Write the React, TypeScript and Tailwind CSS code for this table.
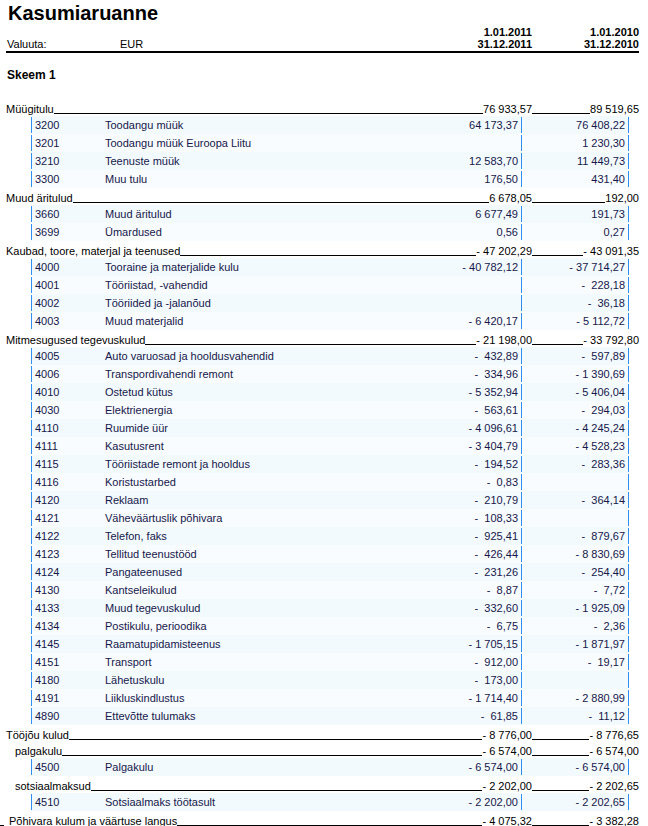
import React from "react";

type Detail = { code: string; name: string; v1: string; v2: string };
type Group = { label: string; v1: string; v2: string; details: Detail[] };

const groups: Group[] = [
  {
    label: "Müügitulu", v1: "76 933,57", v2: "89 519,65",
    details: [
      { code: "3200", name: "Toodangu müük", v1: "64 173,37", v2: "76 408,22" },
      { code: "3201", name: "Toodangu müük Euroopa Liitu", v1: "", v2: "1 230,30" },
      { code: "3210", name: "Teenuste müük", v1: "12 583,70", v2: "11 449,73" },
      { code: "3300", name: "Muu tulu", v1: "176,50", v2: "431,40" },
    ],
  },
  {
    label: "Muud äritulud", v1: "6 678,05", v2: "192,00",
    details: [
      { code: "3660", name: "Muud äritulud", v1: "6 677,49", v2: "191,73" },
      { code: "3699", name: "Ümardused", v1: "0,56", v2: "0,27" },
    ],
  },
  {
    label: "Kaubad, toore, materjal ja teenused", v1: "- 47 202,29", v2: "- 43 091,35",
    details: [
      { code: "4000", name: "Tooraine ja materjalide kulu", v1: "- 40 782,12", v2: "- 37 714,27" },
      { code: "4001", name: "Tööriistad, -vahendid", v1: "", v2: "-  228,18" },
      { code: "4002", name: "Tööriided ja -jalanõud", v1: "", v2: "-  36,18" },
      { code: "4003", name: "Muud materjalid", v1: "- 6 420,17", v2: "- 5 112,72" },
    ],
  },
  {
    label: "Mitmesugused tegevuskulud", v1: "- 21 198,00", v2: "- 33 792,80",
    details: [
      { code: "4005", name: "Auto varuosad ja hooldusvahendid", v1: "-  432,89", v2: "-  597,89" },
      { code: "4006", name: "Transpordivahendi remont", v1: "-  334,96", v2: "- 1 390,69" },
      { code: "4010", name: "Ostetud kütus", v1: "- 5 352,94", v2: "- 5 406,04" },
      { code: "4030", name: "Elektrienergia", v1: "-  563,61", v2: "-  294,03" },
      { code: "4110", name: "Ruumide üür", v1: "- 4 096,61", v2: "- 4 245,24" },
      { code: "4111", name: "Kasutusrent", v1: "- 3 404,79", v2: "- 4 528,23" },
      { code: "4115", name: "Tööriistade remont ja hooldus", v1: "-  194,52", v2: "-  283,36" },
      { code: "4116", name: "Koristustarbed", v1: "-  0,83", v2: "" },
      { code: "4120", name: "Reklaam", v1: "-  210,79", v2: "-  364,14" },
      { code: "4121", name: "Väheväärtuslik põhivara", v1: "-  108,33", v2: "" },
      { code: "4122", name: "Telefon, faks", v1: "-  925,41", v2: "-  879,67" },
      { code: "4123", name: "Tellitud teenustööd", v1: "-  426,44", v2: "- 8 830,69" },
      { code: "4124", name: "Pangateenused", v1: "-  231,26", v2: "-  254,40" },
      { code: "4130", name: "Kantseleikulud", v1: "-  8,87", v2: "-  7,72" },
      { code: "4133", name: "Muud tegevuskulud", v1: "-  332,60", v2: "- 1 925,09" },
      { code: "4134", name: "Postikulu, perioodika", v1: "-  6,75", v2: "-  2,36" },
      { code: "4145", name: "Raamatupidamisteenus", v1: "- 1 705,15", v2: "- 1 871,97" },
      { code: "4151", name: "Transport", v1: "-  912,00", v2: "-  19,17" },
      { code: "4180", name: "Lähetuskulu", v1: "-  173,00", v2: "" },
      { code: "4191", name: "Liikluskindlustus", v1: "- 1 714,40", v2: "- 2 880,99" },
      { code: "4890", name: "Ettevõtte tulumaks", v1: "-  61,85", v2: "-  11,12" },
    ],
  },
];

function GroupRow({ label, v1, v2, sub, stub }: { label: string; v1: string; v2: string; sub?: boolean; stub?: boolean }) {
  return (
    <div className={"flex h-[16px] items-end pr-[9px] text-black " + (sub ? "pl-[15px]" : stub ? "pl-0" : "pl-[6px]")}>
      {stub && <div className="mb-[2px] mr-[5px] w-[4px] border-b border-black" />}
      <span className="whitespace-pre leading-[14px]">{label}</span>
      <div className="mb-[2px] flex-1 border-b border-black" />
      <span className="whitespace-pre leading-[14px]">{v1}</span>
      <div className="flex w-[107px] items-end">
        <div className="mb-[2px] flex-1 border-b border-black" />
        <span className="whitespace-pre leading-[14px]">{v2}</span>
      </div>
    </div>
  );
}

function DetailRow({ d, i }: { d: Detail; i: number }) {
  return (
    <div className={"ml-[31px] mr-[19px] flex h-[18px] text-[#17174a] " + (i % 2 === 0 ? "bg-[#f2fafd]" : "bg-[#f8fcfe]")}>
      <div className="my-px w-[74px] border-l border-[#2e8ff0] pl-[3px] leading-[16px]">{d.code}</div>
      <div className="flex-1 leading-[18px]">{d.name}</div>
      <div className="my-px w-[100px] whitespace-pre border-r border-[#2e8ff0] pr-[3px] text-right leading-[16px]">{d.v1}</div>
      <div className="my-px w-[107px] whitespace-pre border-r border-[#2e8ff0] pr-[3px] text-right leading-[16px]">{d.v2}</div>
    </div>
  );
}

export default function App() {
  return (
    <div className="h-[826px] w-[648px] overflow-hidden bg-white font-['Liberation_Sans',Arial,sans-serif] text-[11px]">
      <div className="pl-[8px] text-[20px] font-bold leading-[26px] text-black">Kasumiaruanne</div>
      <div className="ml-[6px] mr-[9px] flex border-b-2 border-black pb-[1px] text-black">
        <div className="flex flex-1 items-end">
          <span className="w-[114px] pl-px leading-[12px]">Valuuta:</span>
          <span className="leading-[12px]">EUR</span>
        </div>
        <div className="flex flex-col items-end font-bold leading-[12px]">
          <span>1.01.2011</span>
          <span>31.12.2011</span>
        </div>
        <div className="flex w-[107px] flex-col items-end font-bold leading-[12px]">
          <span>1.01.2010</span>
          <span>31.12.2010</span>
        </div>
      </div>
      <div className="mt-[15px] pl-[7px] text-[12px] font-bold leading-[14px] text-black">Skeem 1</div>
      <div className="mt-[18px] flex flex-col gap-[1px]">
        {groups.map((g) => (
          <div key={g.label}>
            <GroupRow label={g.label} v1={g.v1} v2={g.v2} />
            {g.details.map((d, i) => (
              <DetailRow key={d.code} d={d} i={i} />
            ))}
          </div>
        ))}
        <div>
          <GroupRow label="Tööjõu kulud" v1="- 8 776,00" v2="- 8 776,65" />
          <GroupRow label="palgakulu" v1="- 6 574,00" v2="- 6 574,00" sub />
          <DetailRow d={{ code: "4500", name: "Palgakulu", v1: "- 6 574,00", v2: "- 6 574,00" }} i={0} />
        </div>
        <div>
          <GroupRow label="sotsiaalmaksud" v1="- 2 202,00" v2="- 2 202,65" sub />
          <DetailRow d={{ code: "4510", name: "Sotsiaalmaks töötasult", v1: "- 2 202,00", v2: "- 2 202,65" }} i={0} />
        </div>
        <GroupRow label="Põhivara kulum ja väärtuse langus" v1="- 4 075,32" v2="- 3 382,28" stub />
      </div>
    </div>
  );
}
